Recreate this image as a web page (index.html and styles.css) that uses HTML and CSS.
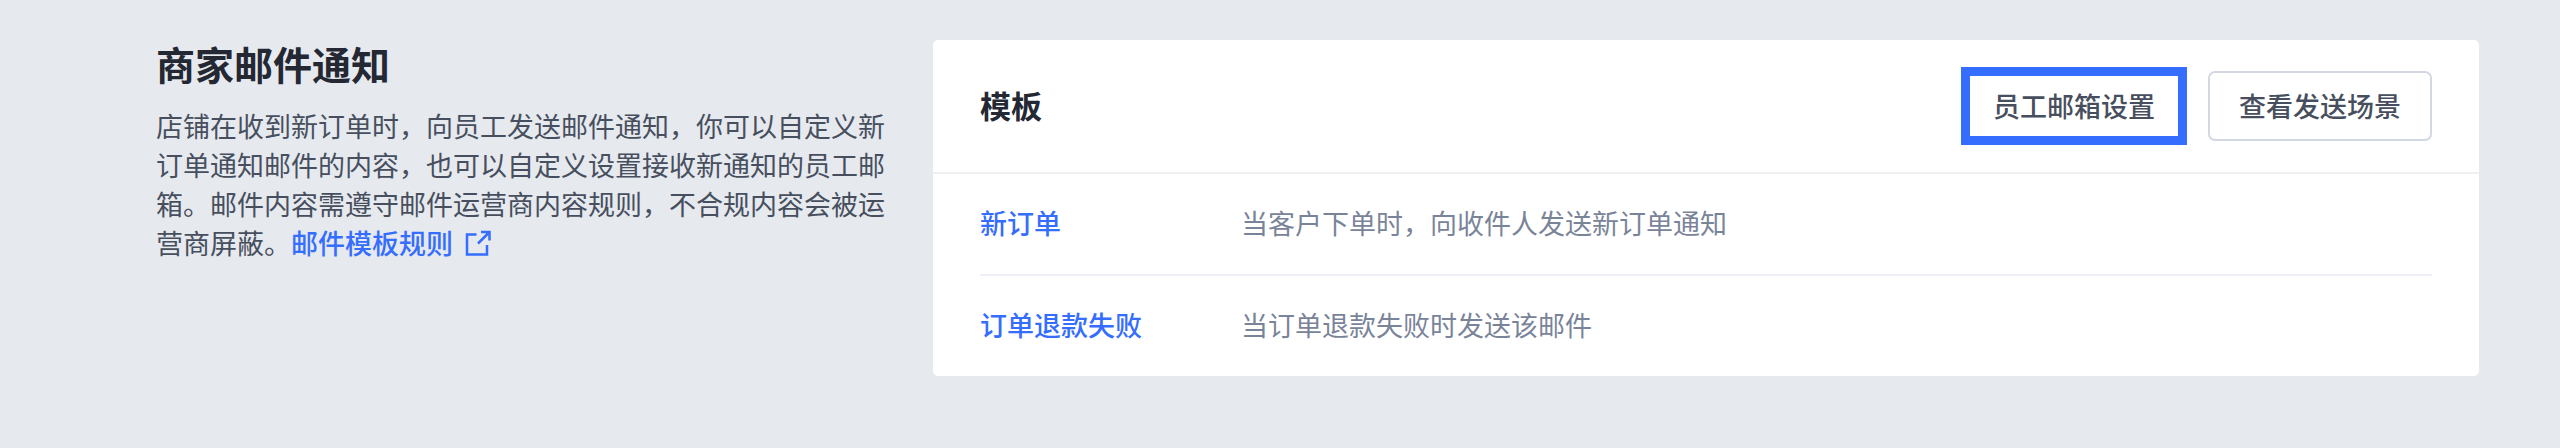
FILE: index.html
```html
<!DOCTYPE html>
<html lang="zh-CN">
<head>
    <meta charset="UTF-8">
    <meta name="viewport" content="width=device-width, initial-scale=1.0">
    <title>商家邮件通知</title>
    <link rel="stylesheet" href="styles.css">
</head>
<body>
    <main class="section">
        <div class="intro">
            <h1>商家邮件通知</h1>
            <p>店铺在收到新订单时，向员工发送邮件通知，你可以自定义新订单通知邮件的内容，也可以自定义设置接收新通知的员工邮箱。邮件内容需遵守邮件运营商内容规则，不合规内容会被运营商屏蔽。<a href="#">邮件模板规则<svg class="icon" viewBox="0 0 26 26" aria-hidden="true"><path d="M11.500 4.500H2v20h20V15"/><path d="M13 13.500L24 2.500M16 2h8.500v8.500"/></svg></a></p>
        </div>
        <div class="card">
            <div class="card-header">
                <h2>模板</h2>
                <div class="actions">
                    <button type="button" class="btn btn-active">员工邮箱设置</button>
                    <button type="button" class="btn">查看发送场景</button>
                </div>
            </div>
            <div class="card-body">
                <table class="templates">
                    <tr>
                        <th scope="row"><a href="#">新订单</a></th>
                        <td>当客户下单时，向收件人发送新订单通知</td>
                    </tr>
                    <tr>
                        <th scope="row"><a href="#">订单退款失败</a></th>
                        <td>当订单退款失败时发送该邮件</td>
                    </tr>
                </table>
            </div>
        </div>
    </main>
</body>
</html>
```
FILE: styles.css
```css
* {
    box-sizing: border-box;
}
body {
    margin: 0;
    background: #e6e9ee;
    color: #474f5e;
    font-family: "Noto Sans CJK SC", sans-serif;
    font-size: 27px;
    line-height: 39px;
}
h1, h2, p {
    margin: 0;
}
h1 {
    color: #242833;
    font-size: 39px;
    font-weight: 700;
    line-height: 46px;
}
h2 {
    padding-bottom: 4px;
    color: #242833;
    font-size: 31px;
    font-weight: 700;
}
a {
    color: #356dff;
    font-weight: 500;
    text-decoration: none;
}
a:hover {
    text-decoration: underline;
}
.section {
    display: grid;
    grid-template-columns: 732px 1fr;
    gap: 45px;
    align-items: start;
    padding: 40px 81px 40px 156px;
}
.intro p {
    margin-top: 20px;
}
.icon {
    width: 26px;
    height: 26px;
    margin-left: 12px;
    vertical-align: -2px;
    fill: none;
    stroke: #356dff;
    stroke-width: 2.5;
}
.card {
    background: #fff;
    border-radius: 5px;
}
.card-header {
    display: flex;
    align-items: center;
    justify-content: space-between;
    height: 134px;
    padding: 0 47px;
    border-bottom: 2px solid #eff0f2;
}
.actions {
    display: flex;
    align-items: center;
    gap: 21px;
}
.btn {
    height: 70px;
    padding: 0 29px 2px;
    border: 2px solid #d3d7e2;
    border-radius: 7px;
    background: #fff;
    color: #474f5e;
    font-family: inherit;
    font-size: 27px;
    font-weight: 500;
    line-height: 39px;
    cursor: pointer;
}
.btn-active {
    height: 78px;
    padding: 0 23px 2px;
    border: 9px solid #356dff;
    border-radius: 0;
}
.card-body {
    padding: 0 47px;
}
.templates {
    width: 100%;
    border-collapse: collapse;
}
.templates th,
.templates td {
    height: 101px;
    padding: 0 0 4px;
    text-align: left;
    font-weight: 400;
}
.templates th {
    width: 261px;
}
.templates td {
    color: #7a8499;
}
.templates tr + tr {
    border-top: 2px solid #eff0f7;
}
```
